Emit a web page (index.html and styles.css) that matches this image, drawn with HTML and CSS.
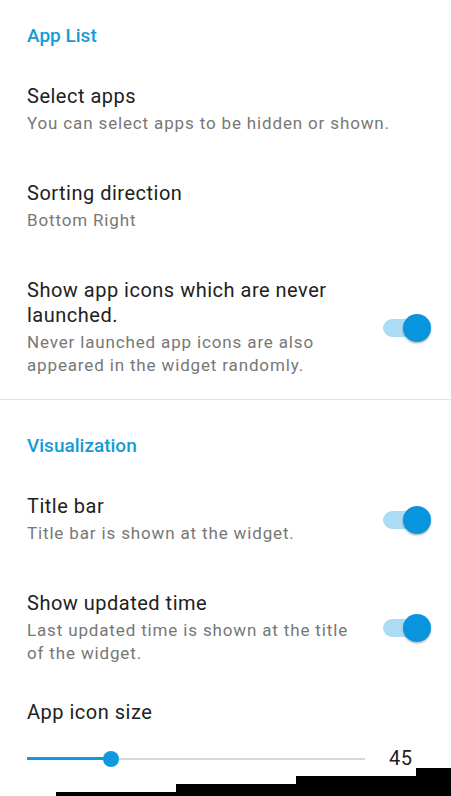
FILE: index.html
```html
<!DOCTYPE html>
<html lang="en">
<head>
<meta charset="utf-8">
<title>Settings</title>
<link rel="stylesheet" href="styles.css">
</head>
<body>
<div class="screen">
  <section class="category">
    <h2 class="cat-title">App List</h2>
    <div class="pref">
      <div class="pref-text">
        <div class="pref-title">Select apps</div>
        <div class="pref-summary">You can select apps to be hidden or shown.</div>
      </div>
    </div>
    <div class="pref">
      <div class="pref-text">
        <div class="pref-title">Sorting direction</div>
        <div class="pref-summary">Bottom Right</div>
      </div>
    </div>
    <div class="pref">
      <div class="pref-text narrow">
        <div class="pref-title">Show app icons which are never launched.</div>
        <div class="pref-summary">Never launched app icons are also appeared in the widget randomly.</div>
      </div>
      <div class="switch-frame"><div class="switch"><span class="track"></span><span class="thumb"></span></div></div>
    </div>
  </section>
  <div class="divider"></div>
  <section class="category second">
    <h2 class="cat-title">Visualization</h2>
    <div class="pref">
      <div class="pref-text narrow">
        <div class="pref-title">Title bar</div>
        <div class="pref-summary">Title bar is shown at the widget.</div>
      </div>
      <div class="switch-frame"><div class="switch"><span class="track"></span><span class="thumb"></span></div></div>
    </div>
    <div class="pref">
      <div class="pref-text narrow">
        <div class="pref-title">Show updated time</div>
        <div class="pref-summary">Last updated time is shown at the title of the widget.</div>
      </div>
      <div class="switch-frame"><div class="switch"><span class="track"></span><span class="thumb"></span></div></div>
    </div>
    <div class="pref slider-pref">
      <div class="pref-title">App icon size</div>
      <div class="slider-row">
        <div class="slider">
          <span class="slider-active" style="width: 84px"></span>
          <span class="slider-thumb" style="left: 84px"></span>
        </div>
        <div class="slider-value">45</div>
      </div>
    </div>
  </section>
</div>
<svg class="glitch" width="451" height="796" viewBox="0 0 451 796" aria-hidden="true">
  <polygon points="416,768 451,768 451,796 56,796 56,792 176,792 176,784 296,784 296,776 416,776" fill="#000"/>
</svg>
</body>
</html>
```
FILE: styles.css
```css
* { box-sizing: border-box; }
html, body { margin: 0; padding: 0; background: #fff; }
body {
  font-family: Roboto, "Noto Sans", "Liberation Sans", sans-serif;
  width: 451px;
  height: 796px;
  overflow: hidden;
  position: relative;
}
.screen { display: flex; flex-direction: column; }
.cat-title {
  margin: 0;
  padding: 26px 27px 14px;
  font-size: 19px;
  line-height: 20px;
  font-weight: 500;
  color: #139bd9;
}
.second .cat-title { padding-top: 36px; }
.pref {
  display: flex;
  align-items: center;
  padding: 24px 0 22px 27px;
}
.pref-text { flex: 1; padding-right: 27px; }
.pref-text.narrow { padding-right: 0; }
.pref-title {
  font-size: 20px;
  line-height: 25px;
  letter-spacing: 0.5px;
  color: #212121;
}
.pref-summary {
  margin-top: 3px;
  font-size: 17px;
  line-height: 23px;
  letter-spacing: 0.85px;
  color: #777;
}
.switch-frame {
  flex: 0 0 auto;
  padding: 0 20px 0 23px;
}
.switch {
  position: relative;
  width: 48px;
  height: 28px;
}
.track {
  position: absolute;
  left: 0;
  top: 5px;
  width: 36px;
  height: 18px;
  border-radius: 9px;
  background: #abdcf4;
}
.thumb {
  position: absolute;
  right: 0;
  top: 0;
  width: 28px;
  height: 28px;
  border-radius: 50%;
  background: #0895de;
  box-shadow: 0 1.5px 2px rgba(0,0,0,0.28);
}
.divider { height: 1px; background: #e3e3e3; }
.slider-pref {
  flex-direction: column;
  align-items: stretch;
  padding: 13px 0 0 27px;
}
.slider-row {
  display: flex;
  align-items: center;
  margin-top: 21px;
}
.slider {
  position: relative;
  width: 338px;
  height: 16px;
}
.slider::before {
  content: "";
  position: absolute;
  left: 0;
  right: 0;
  top: 7px;
  height: 2px;
  background: #d9d9d9;
}
.slider-active {
  position: absolute;
  left: 0;
  top: 6.5px;
  height: 3px;
  background: #0f9ade;
}
.slider-thumb {
  position: absolute;
  top: 0;
  width: 16px;
  height: 16px;
  margin-left: -8px;
  border-radius: 50%;
  background: #0f9ade;
}
.slider-value {
  margin-left: 24px;
  font-size: 20px;
  line-height: 25px;
  letter-spacing: 0.5px;
  color: #212121;
}
.glitch { position: absolute; left: 0; top: 0; pointer-events: none; }
```
